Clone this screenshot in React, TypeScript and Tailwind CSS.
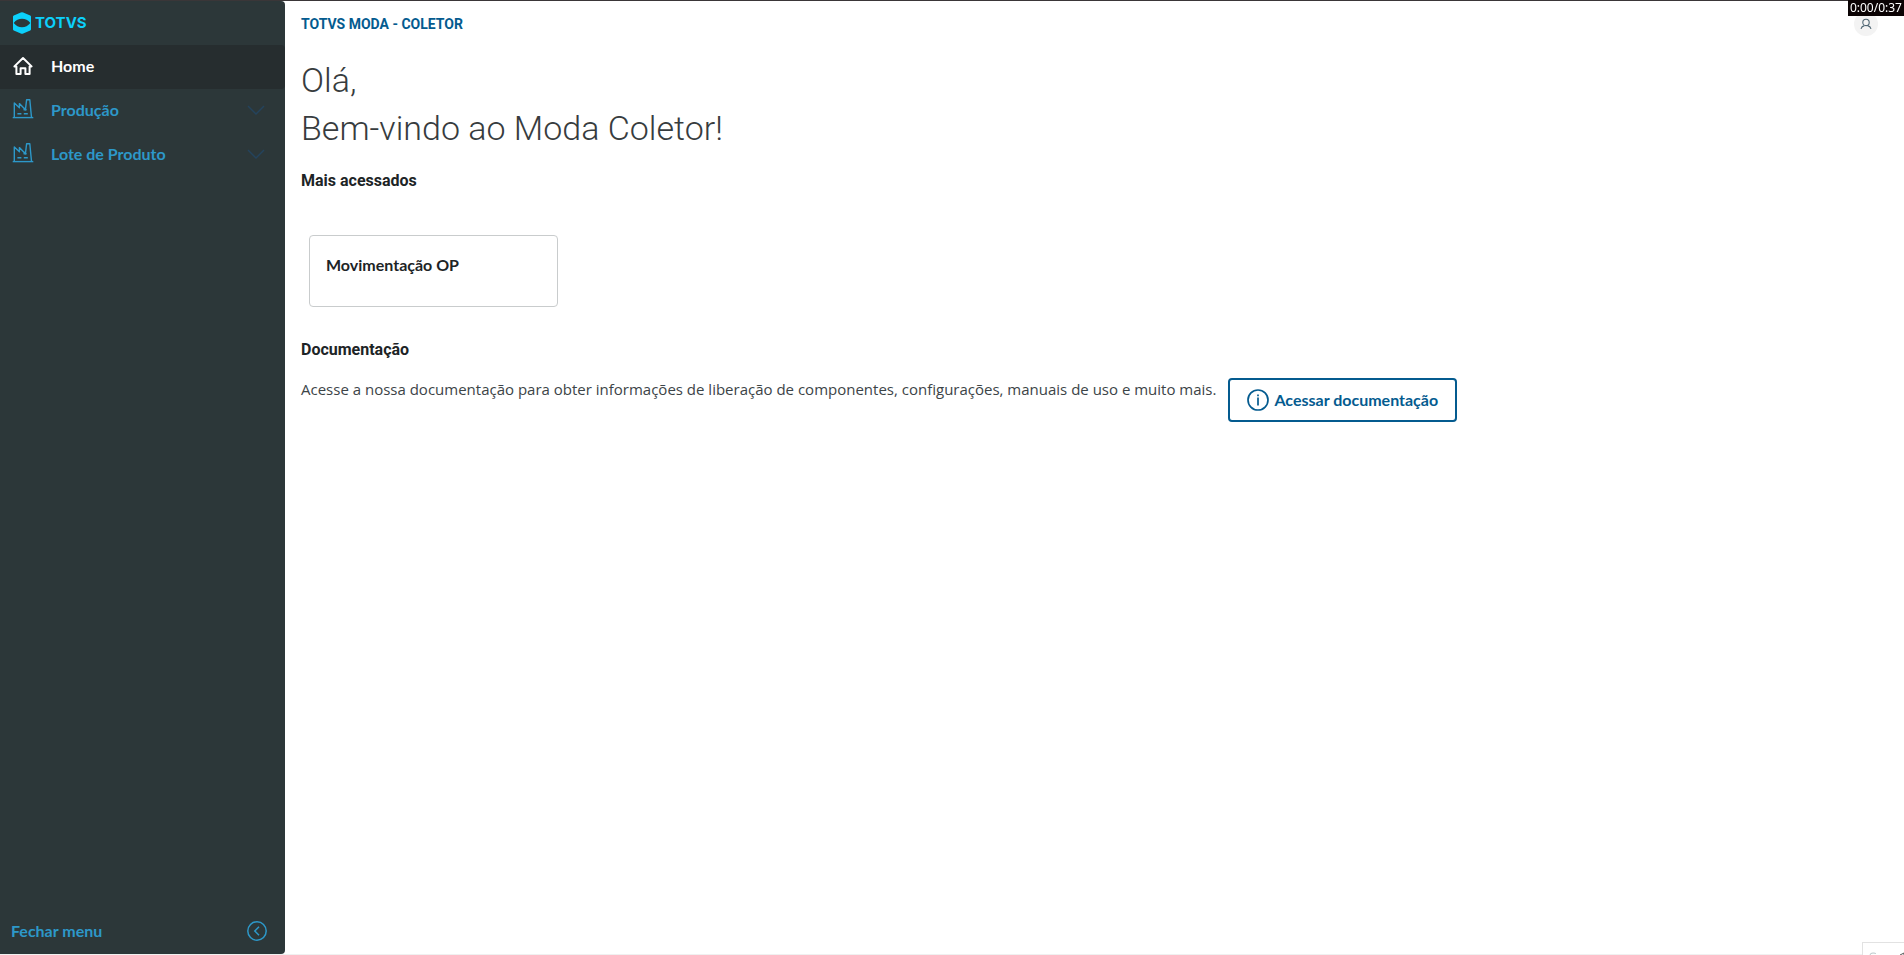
import type { ReactNode } from "react";

const menuItems = [{ label: "Produção" }, { label: "Lote de Produto" }];

const TotvsMark = () => (
  <svg viewBox="0 0 18 22" className="h-[22px] w-[18px]" fill="#0cd0fb" aria-hidden="true">
    <path
      fillRule="evenodd"
      d="M0 4.6Q0 3.8.8 3.4L7.8.4Q9-.1 10.2.4L17.2 3.4Q18 3.8 18 4.6V17.2Q18 18 17.2 18.4L10.2 21.5Q9 22 7.8 21.5L.8 18.4Q0 18 0 17.2ZM.7 11Q4 15.2 9 15.2T17.3 11Q14 6.8 9 6.8T.7 11Z"
    />
  </svg>
);

const HomeIcon = () => (
  <svg viewBox="0 0 22 22" className="size-[22px]" fill="none" stroke="currentColor" strokeWidth="2" strokeLinejoin="round" aria-hidden="true">
    <path d="M4.4 11.4H2.4L11 3L19.6 11.4H17.6V18.9H13.4V13.2H8.6V18.9H4.4Z" />
  </svg>
);

const FactoryIcon = () => (
  <svg viewBox="0 0 22 22" className="size-[22px]" fill="none" stroke="currentColor" strokeWidth="1.4" aria-hidden="true">
    <path d="M.7 18.6H21.3" />
    <path d="M2.3 18.4V4L7.4 8.8V4.6L13.4 10.8L14.6 .8H17.8L19.5 18.4" strokeLinejoin="round" />
    <path d="M13.6 8.6L12 10.8H14.6" strokeLinejoin="round" />
    <path d="M5.4 14.8H9.4M11.8 14.8H15.8" />
  </svg>
);

const ChevronDown = () => (
  <svg viewBox="0 0 18 10" className="h-[10px] w-[18px]" fill="none" stroke="#24435c" strokeWidth="1.5" aria-hidden="true">
    <path d="M1 1L9 9L17 1" />
  </svg>
);

const InfoIcon = () => (
  <svg viewBox="0 0 22 22" className="size-[22px]" fill="none" stroke="currentColor" strokeWidth="1.7" aria-hidden="true">
    <circle cx="11" cy="11" r="10" />
    <path d="M11 8.6V16.4M11 5.4V7.2" />
  </svg>
);

const CloseIcon = () => (
  <svg viewBox="0 0 20 20" className="size-5" fill="none" stroke="currentColor" strokeWidth="1.5" aria-hidden="true">
    <circle cx="10" cy="10" r="9.2" />
    <path d="M12 5.8L7.8 10L12 14.2" />
  </svg>
);

const UserIcon = () => (
  <svg viewBox="0 0 12 12" className="size-3" fill="none" stroke="#4f6673" strokeWidth="1.1" aria-hidden="true">
    <circle cx="6" cy="4.4" r="3.2" />
    <path d="M1 10.8Q1.6 8.4 4.4 7.6M11 10.8Q10.4 8.4 7.6 7.6" />
  </svg>
);

const SectionTitle = ({ children }: { children: ReactNode }) => (
  <h2 className="font-[Roboto] text-base leading-6 font-bold text-[#1d2426]">{children}</h2>
);

const Sidebar = () => (
  <aside className="flex w-[285px] shrink-0 flex-col rounded-r-sm bg-[#2c3739] text-[#2d98c9]">
    <div className="flex h-11 items-center gap-1 px-[13px]">
      <TotvsMark />
      <span className="font-[Inter] text-[15px] leading-5 font-bold text-[#0cd0fb]">TOTVS</span>
    </div>
    <nav className="flex flex-col font-bold">
      <a href="#home" className="flex h-11 items-center gap-4 rounded-r-sm bg-[#262d2f] px-3 pb-0.5 text-white">
        <HomeIcon />
        <span className="pl-px">Home</span>
      </a>
      {menuItems.map((item) => (
        <button key={item.label} type="button" className="flex h-11 items-center gap-4 pr-5 pb-0.5 pl-3 text-left">
          <FactoryIcon />
          <span className="flex-1 pl-px">{item.label}</span>
          <ChevronDown />
        </button>
      ))}
    </nav>
    <button type="button" className="mt-auto flex h-11 items-center justify-between pr-[18px] pb-0.5 pl-[11px] font-bold">
      <span>Fechar menu</span>
      <CloseIcon />
    </button>
  </aside>
);

const App = () => {
  return (
    <div className="flex min-h-screen flex-col border-t border-t-[#3a3638] border-b border-b-[#f0f0f0] bg-white font-[Lato,sans-serif] text-base leading-6">
      <div className="flex flex-1">
        <Sidebar />
        <div className="min-w-0 flex-1 px-4">
          <header className="flex h-[46px] items-center justify-between pr-[6px]">
            <span className="font-[Roboto] text-sm font-bold text-[#045b8f]">TOTVS MODA - COLETOR</span>
            <button type="button" aria-label="Usuário" className="mr-1 flex size-6 items-center justify-center rounded-full bg-[#f3f3f3]">
              <UserIcon />
            </button>
          </header>
          <main>
            <h1 className="pt-[9px] font-[Roboto] text-[34px] leading-[48px] font-light text-[#373c3e]">
              Olá,
              <br />
              Bem-vindo ao Moda Coletor!
            </h1>
            <section className="pt-[17px]">
              <SectionTitle>Mais acessados</SectionTitle>
              <div className="px-2 pt-[42px]">
                <a href="#movimentacao" className="block h-[72px] w-[249px] rounded border border-[#c9cccd] px-4 pt-[17px] font-bold text-[#1d2426]">
                  Movimentação OP
                </a>
              </div>
            </section>
            <section className="pt-[31px]">
              <SectionTitle>Documentação</SectionTitle>
              <div className="flex items-start gap-3 pt-4">
                <p className="font-['Open_Sans'] text-[15px] leading-[22px] text-[#3c4447]">
                  Acesse a nossa documentação para obter informações de liberação de componentes, configurações, manuais de uso e muito mais.
                </p>
                <button type="button" className="flex h-11 shrink-0 items-center gap-[5px] rounded border-2 border-[#045b8f] px-[17px] font-bold text-[#045b8f]">
                  <InfoIcon />
                  Acessar documentação
                </button>
              </div>
            </section>
          </main>
        </div>
      </div>
      <div className="fixed top-0 right-0 h-4 bg-[#0b0304] px-0.5 font-['Noto_Sans'] text-xs leading-4 text-white">0:00/0:37</div>
      <div className="fixed right-0 bottom-0 h-[13px] w-[42px] overflow-hidden border-t border-l border-[#e2e2e2] bg-white">
        <svg viewBox="0 0 42 12" className="h-3 w-[42px]" fill="none" aria-hidden="true">
          <path d="M7 12Q7 10 10 10T13 11" stroke="#b9c8c9" />
          <path d="M37 12L41 10V12" stroke="#555" />
        </svg>
      </div>
    </div>
  );
};

export default App;
